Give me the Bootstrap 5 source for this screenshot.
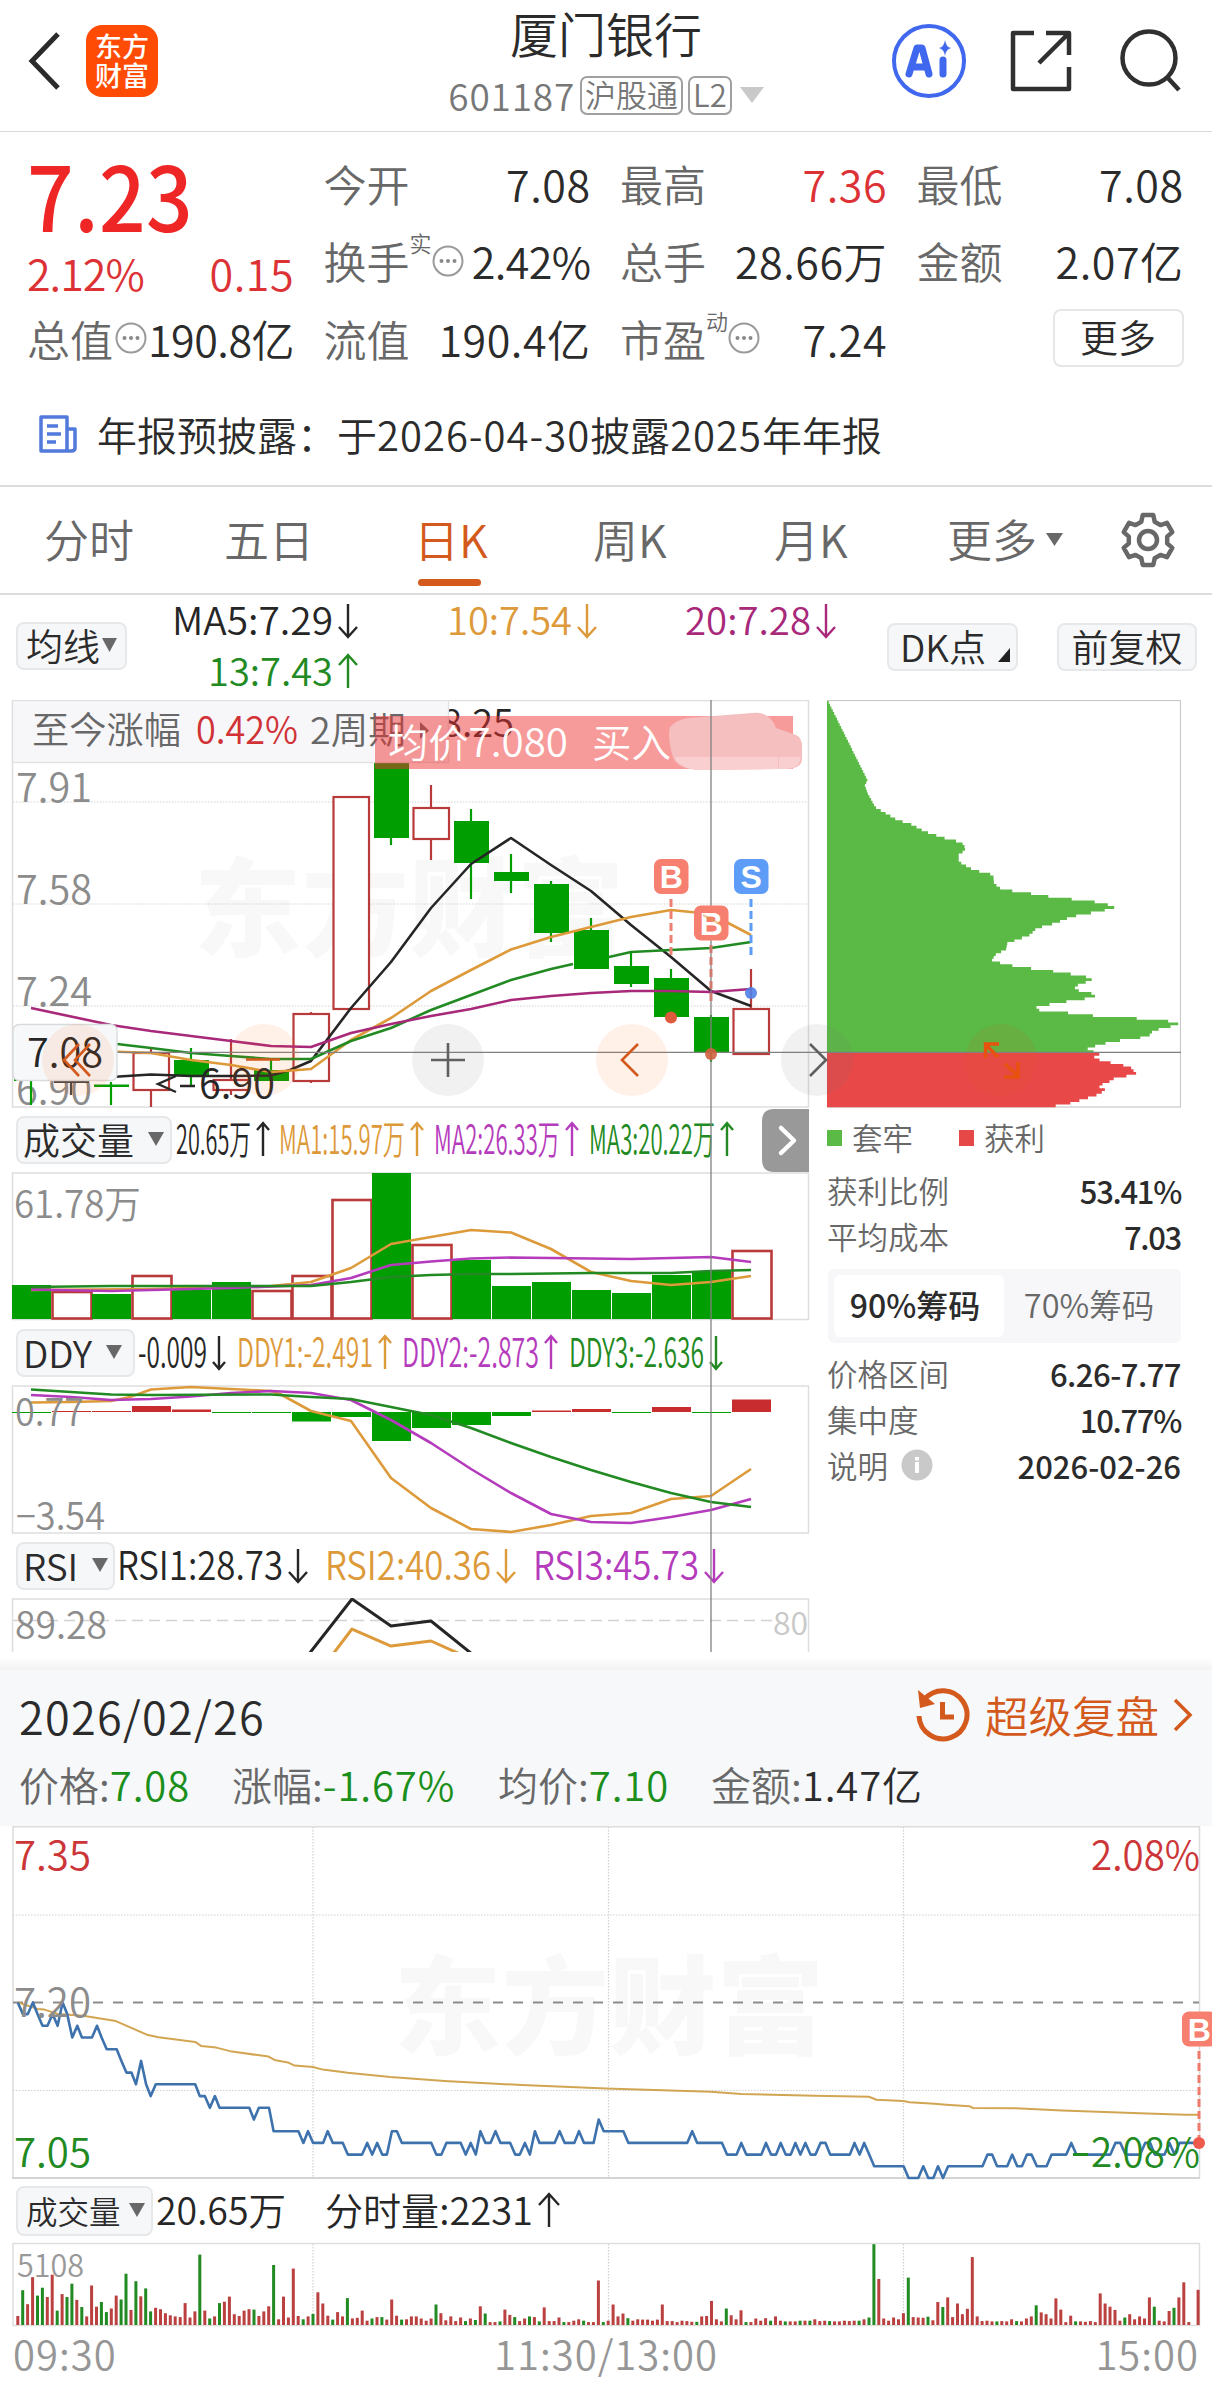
<!DOCTYPE html>
<html lang="zh-CN">
<head>
<meta charset="utf-8">
<meta name="viewport" content="width=device-width, initial-scale=1">
<title>厦门银行 601187</title>
<link href="https://cdn.jsdelivr.net/npm/bootstrap@5.3.0/dist/css/bootstrap.min.css" rel="stylesheet">
<style>
body{width:1212px;height:2383px;overflow:hidden;background:#fff;color:#2b2b2b;font-family:"Noto Sans CJK SC",sans-serif;font-weight:350;font-size:42px;line-height:1;white-space:nowrap}
svg{display:block;flex:none}
svg text{font-family:"Noto Sans CJK SC",sans-serif}
.c-gray{color:#686868}.c-red{color:#dc3236}.c-green{color:#1b8f1b}.c-orange{color:#d35a1c}
.topbar{height:132px;border-bottom:1.5px solid #dadada;padding:0 28px}
.top-side{width:400px;padding-bottom:9px}
.logo-box{width:72px;height:72px;border-radius:16px;background:#ff4b04;color:#fff;font-size:27px;line-height:29px;font-weight:500;margin-left:26px;padding-top:6px}
.stock-name{font-size:48px;height:68px;line-height:64px}
.stock-code{font-size:37px;color:#777;height:42px;margin-top:7px;margin-bottom:15px}
.stock-code>span:first-child{letter-spacing:.8px}
.stock-code>span{position:relative}
.mini-tag{border:2px solid #a0a0a0;border-radius:7px;height:39px;font-size:31px;line-height:32px;padding:0 3px;margin-left:5px;color:#777}
.quote{height:245px;padding:15px 29px 0 27px;display:grid;grid-template-columns:repeat(4,267px);column-gap:29.5px;grid-template-rows:repeat(3,77.5px)}
.quote .cell{display:flex;justify-content:space-between;align-items:center;height:72px;font-size:43px}
.quote .cell>span:last-child{letter-spacing:.5px}
.sup-note{font-size:22px;align-self:flex-start;margin-top:-8px;line-height:22px}
.quote .cell .big-price{display:inline-block;font-size:89px;font-weight:500;color:#ee2626;letter-spacing:-3px;line-height:80px;transform:scaleX(.92);transform-origin:left;padding-top:22px}
.more-btn{width:131px;height:58px;border:2px solid #e6e6e6;border-radius:8px;font-size:38px;line-height:50px;margin-left:auto;text-align:center}
.notice{height:110px;border-bottom:2px solid #dcdcdc;padding:5px 0 0 38px;font-size:40px}
.notice .nums{letter-spacing:1px}
.ktabs{height:108px;border-bottom:2px solid #dcdcdc;font-size:45px;color:#686868;padding-left:44px}
.ktabs .ktab{height:106px;line-height:104px;position:relative}
.ktabs .on{color:#d35a1c}
.ktabs .on::after{content:"";position:absolute;left:4px;bottom:7px;width:63px;height:7px;border-radius:4px;background:#d35a1c}
.mabar{height:105px;padding-left:16px}
.soft-btn{background:#f6f7f9;border:2px solid #e6e8ea;border-radius:8px;height:48px;font-size:37px;line-height:40px;padding-bottom:3px;display:flex;align-items:center;color:#2b2b2b;flex:none}
.charts{height:952px;position:relative}
.leftcol{width:820px}
.indrow{height:64px;padding-left:16px}
.overlay{position:absolute;left:0;top:0}
.chipcol{width:392px;padding-right:31px}
.chiprow{height:46px;font-size:30.5px;color:#686868;padding-left:7px}
.chiprow b,.seg b{font-weight:500;color:#2b2b2b;font-size:32px}
.chiprow b{font-size:31px}
.chiprow .tight{letter-spacing:-1.3px}
.legend-sq{width:15px;height:16px;display:inline-block}
.seg{margin:8px 0 7px 8px;background:#f7f7fa;border-radius:6px;height:74px;padding:6px;font-size:32.5px;color:#686868}
.seg>div{width:170px;height:62px;line-height:57px;text-align:center;border-radius:6px}
.seg>div:first-child{padding-right:8px}
.gapbar{height:18px;background:linear-gradient(#fff 0,#fff 30%,#f3f3f3 100%)}
.daypanel{height:156px;background:#f7f8fa;padding:0 19px}
.dayrow{height:66px;padding-top:4px;font-size:40px}
.dayrow .v{letter-spacing:.9px}
.timeaxis{padding:5px 13px 0;font-size:40px;letter-spacing:1px;color:#969696}
</style>
</head>
<body>

<header class="topbar d-flex justify-content-between">
  <div class="top-side d-flex align-items-center">
    <svg width="32" height="58" viewBox="0 0 32 58" fill="none" stroke="#2b2b2b" stroke-width="5"><path d="M30 2L4 29 30 56"/></svg>
    <div class="logo-box text-center">东方<br>财富</div>
  </div>
  <div class="text-center d-flex flex-column align-items-center">
    <div class="stock-name">厦门银行</div>
    <div class="stock-code d-flex align-items-center justify-content-center">
      <span>601187</span><span class="mini-tag">沪股通</span><span class="mini-tag">L2</span>
      <svg class="ms-2" width="24" height="18"><path d="M0 1h24L12 17z" fill="#c9c9c9"/></svg>
    </div>
  </div>
  <div class="top-side d-flex align-items-center justify-content-end">
    <svg width="76" height="76" viewBox="0 0 76 76"><circle cx="38" cy="38" r="35" fill="#fff" stroke="#4068ee" stroke-width="4"/><g stroke="#4068ee" fill="none" stroke-linecap="round" stroke-linejoin="round" stroke-width="7"><path d="M18 51L26 25H31L38 51M22 44H35"/><path d="M52 37v14"/></g><path d="M54 17q1 7 6 8-5 1-6 8-1-7-6-8 5-1 6-8z" fill="#4068ee"/></svg>
    <svg style="margin-left:43px" width="62" height="62" viewBox="0 0 62 62" fill="none" stroke="#303030" stroke-width="4.5" stroke-linejoin="round"><path d="M24 3H3v56h56V37M36 3h23v22M58 4L29 33"/></svg>
    <svg style="margin-left:46px;margin-right:2px" width="64" height="64" viewBox="0 0 64 64" fill="none" stroke="#303030" stroke-width="4.5"><circle cx="31" cy="29" r="26.5"/><path d="M49 48L61 61"/></svg>
  </div>
</header>

<section class="quote">
  <div class="cell"><span class="big-price">7.23</span></div>
  <div class="cell"><span class="c-gray">今开</span><span>7.08</span></div>
  <div class="cell"><span class="c-gray">最高</span><span class="c-red">7.36</span></div>
  <div class="cell"><span class="c-gray">最低</span><span>7.08</span></div>
  <div class="cell c-red" style="padding-top:24px"><span style="letter-spacing:-1px">2.12%</span><span>0.15</span></div>
  <div class="cell"><span class="c-gray d-flex align-items-center">换手<span class="sup-note">实</span><svg width="32" height="32" viewBox="0 0 32 32"><use href="#dots"/></svg></span><span style="letter-spacing:-.6px">2.42%</span></div>
  <div class="cell"><span class="c-gray">总手</span><span>28.66万</span></div>
  <div class="cell"><span class="c-gray">金额</span><span>2.07亿</span></div>
  <div class="cell"><span class="c-gray d-flex align-items-center">总值<svg style="margin-left:2px" width="32" height="32" viewBox="0 0 32 32"><use href="#dots"/></svg></span><span style="letter-spacing:-.5px">190.8亿</span></div>
  <div class="cell"><span class="c-gray">流值</span><span>190.4亿</span></div>
  <div class="cell"><span class="c-gray d-flex align-items-center">市盈<span class="sup-note">动</span><svg width="32" height="32" viewBox="0 0 32 32"><use href="#dots"/></svg></span><span>7.24</span></div>
  <div class="cell"><div class="more-btn">更多</div></div>
</section>
<svg width="0" height="0" class="position-absolute"><defs><g id="dots"><circle cx="16" cy="16" r="14.500" fill="none" stroke="#999" stroke-width="2"/><g fill="#888"><circle cx="9.500" cy="16" r="2"/><circle cx="16" cy="16" r="2"/><circle cx="22.500" cy="16" r="2"/></g></g></defs></svg>

<section class="notice d-flex align-items-center">
  <svg width="40" height="40" viewBox="0 0 40 40" fill="none" stroke="#5279dc" stroke-width="3.500" stroke-linejoin="round"><path d="M3 3h26v34H3zM29 15h8v19q0 3-4 3h-6M9 12h11M9 20h14M9 28h9"/></svg>
  <span style="margin-left:19px">年报预披露：于<span class="nums">2026-04-30</span>披露<span class="nums">2025</span>年年报</span>
</section>

<nav class="ktabs d-flex">
  <span class="ktab" style="width:180px">分时</span><span class="ktab" style="width:190px">五日</span><span class="ktab on" style="width:179px">日K</span><span class="ktab" style="width:181px">周K</span><span class="ktab" style="width:173px">月K</span><span class="ktab">更多</span>
  <svg style="margin:45px 0 0 9px" width="18" height="14"><path d="M0 1h17L8.500 14z" fill="#686868"/></svg>
  <svg style="margin:24px 0 0 55px" width="58" height="58" viewBox="-29 -29 58 58" fill="none" stroke="#686868" stroke-width="4.500" stroke-linejoin="round"><path id="gear"/><circle r="9"/></svg>
</nav>

<section class="mabar d-flex">
  <div class="soft-btn" style="margin-top:27px;width:111px;padding-left:8px">均线<svg width="16" height="14" style="margin-left:2px"><path d="M0 0h15L7.500 14z" fill="#686868"/></svg></div>
  <svg id="malegend" width="740" height="105" viewBox="127 595 740 105" overflow="visible"></svg>
  <div class="soft-btn" style="margin:28px 0 0 20px;width:131px;padding-left:11px">DK点<svg width="12" height="14" style="margin:18px 0 0 12px"><path d="M12 0V14H0z" fill="#222"/></svg></div>
  <div class="soft-btn justify-content-center" style="margin:28px 0 0 39px;width:140px">前复权</div>
</section>

<main class="charts d-flex">
  <div class="leftcol">
    <svg id="kchart" width="820" height="408" viewBox="0 700 820 408"></svg>
    <div class="indrow d-flex align-items-center"><div class="soft-btn" style="width:156px;padding-left:5px">成交量<svg width="17" height="14" style="margin-left:14px"><path d="M0 0h16L8 14z" fill="#686868"/></svg></div><svg id="vleg" width="640" height="64" viewBox="172 1108 640 64"></svg></div>
    <svg id="vchart" width="820" height="149" viewBox="0 1172 820 149"></svg>
    <div class="indrow d-flex align-items-center"><div class="soft-btn" style="width:119px;padding-left:5px">DDY<svg width="17" height="14" style="margin-left:14px"><path d="M0 0h16L8 14z" fill="#686868"/></svg></div><svg id="dleg" width="640" height="64" viewBox="135 1321 640 64"></svg></div>
    <svg id="dchart" width="820" height="149" viewBox="0 1385 820 149"></svg>
    <div class="indrow d-flex align-items-center"><div class="soft-btn" style="width:99px;padding-left:5px">RSI<svg width="17" height="14" style="margin-left:14px"><path d="M0 0h16L8 14z" fill="#686868"/></svg></div><svg id="rleg" width="640" height="64" viewBox="115 1534 640 64"></svg></div>
    <svg id="rchart" width="820" height="54" viewBox="0 1598 820 54"></svg>
  </div>
  <div class="chipcol">
    <svg id="chip" width="361" height="408" viewBox="820 700 361 408"></svg>
    <div class="chiprow d-flex align-items-center" style="height:59px"><i class="legend-sq" style="background:#5bb946"></i><span style="margin-left:10px;width:107px">套牢</span><i class="legend-sq" style="background:#e64848"></i><span style="margin-left:10px">获利</span></div>
    <div class="chiprow d-flex align-items-center justify-content-between"><span>获利比例</span><b class="tight">53.41%</b></div>
    <div class="chiprow d-flex align-items-center justify-content-between"><span>平均成本</span><b class="tight">7.03</b></div>
    <div class="seg d-flex" style="margin-top:10px"><div class="bg-white"><b>90%筹码</b></div><div>70%筹码</div></div>
    <div class="chiprow d-flex align-items-center justify-content-between"><span>价格区间</span><b style="letter-spacing:-.5px">6.26-7.77</b></div>
    <div class="chiprow d-flex align-items-center justify-content-between"><span>集中度</span><b class="tight">10.77%</b></div>
    <div class="chiprow d-flex align-items-center justify-content-between"><span class="d-flex align-items-center">说明<svg width="32" height="32" viewBox="0 0 32 32" style="margin-left:13px"><circle cx="16" cy="16" r="15.500" fill="#c9c9c9"/><path d="M14 8h4v3.500h-4zM14 13h4v11h-4z" fill="#fff"/></svg></span><b>2026-02-26</b></div>
  </div>
  <svg id="overlay" class="overlay" width="1212" height="952" viewBox="0 700 1212 952"></svg>
</main>

<div class="gapbar"></div>
<section class="daypanel">
  <div class="d-flex align-items-center justify-content-between" style="height:90px">
    <span style="font-size:45px;letter-spacing:1.300px">2026/02/26</span>
    <span class="c-orange d-flex align-items-center" style="font-size:43.500px">
      <svg width="56" height="56" viewBox="0 0 56 56" fill="none" stroke="#d35a1c" stroke-width="5"><path d="M4 29A24 24 0 1 0 9.500 12.500M27.500 15V30H39"/><path d="M3 3l2 18 15-4z" fill="#d35a1c" stroke="none"/></svg>
      <span style="margin-left:14px">超级复盘</span>
      <svg style="margin-left:14px" width="20" height="34" viewBox="0 0 20 34" fill="none" stroke="#d35a1c" stroke-width="3.500"><path d="M2 2L17 17 2 32"/></svg>
    </span>
  </div>
  <div class="dayrow d-flex"><span style="width:213px"><span class="c-gray">价格:</span><span class="c-green v">7.08</span></span><span style="width:266px"><span class="c-gray">涨幅:</span><span class="c-green v">-1.67%</span></span><span style="width:213px"><span class="c-gray">均价:</span><span class="c-green v">7.10</span></span><span><span class="c-gray">金额:</span><span class="v">1.47亿</span></span></div>
</section>
<svg id="mchart" width="1212" height="354" viewBox="0 1826 1212 354"></svg>
<div class="d-flex align-items-center" style="height:62px;padding-left:16px">
  <div class="soft-btn" style="width:137px;height:50px;padding-left:8px;font-size:31.500px">成交量<svg width="17" height="14" style="margin-left:8px"><path d="M0 0h16L8 14z" fill="#686868"/></svg></div>
  <svg id="mleg" width="640" height="62" viewBox="153 2180 640 62"></svg>
</div>
<svg id="mvol" width="1212" height="86" viewBox="0 2242 1212 86"></svg>
<footer class="timeaxis d-flex justify-content-between"><span>09:30</span><span>11:30/13:00</span><span>15:00</span></footer>

<script src="https://cdn.jsdelivr.net/npm/bootstrap@5.3.0/dist/js/bootstrap.bundle.min.js"></script>
<script>
const $=id=>document.getElementById(id);
const G='#009e00',R='#b93a3a',BK='#262626',OR='#dd9a3a',MG='#a8287a',PU='#b53bbd',DG='#228a22',AX='#8c8c8c';
const put=(id,s)=>{$(id).innerHTML+=s};
const rect=(x,y,w,h,f,e='')=>`<rect x="${x}" y="${y}" width="${w}" height="${h}" fill="${f}" ${e}/>`;
const line=(x1,y1,x2,y2,c,w=1,e='')=>`<line x1="${x1}" y1="${y1}" x2="${x2}" y2="${y2}" stroke="${c}" stroke-width="${w}" ${e}/>`;
const poly=(p,c,w=2.6)=>`<polyline points="${p}" fill="none" stroke="${c}" stroke-width="${w}" stroke-linejoin="round"/>`;
// fitted text: spans x..x2 on baseline y
const txt=(x,x2,y,s,size,f,e='')=>`<text x="${x}" y="${y}" font-size="${size}" fill="${f}" ${x2?`textLength="${x2-x}" lengthAdjust="spacingAndGlyphs"`:''} ${e}>${s}</text>`;
// legend entry with a drawn trend arrow at its end
const leg=(x,x2,y,s,size,c,up,aw=10)=>{const t=x2-aw;
  return txt(x,x2-2*aw-5,y,s,size,c)+`<path d="M${t} ${y-31}V${y+2}M${t-aw+1} ${up?y-31+aw:y+2-aw}L${t} ${up?y-31:y+2}L${t+aw-1} ${up?y-31+aw:y+2-aw}" fill="none" stroke="${c}" stroke-width="2.4"/>`};
const mark=(x,y,s,c)=>rect(x,y,34.5,35,c,'rx="7"')+`<text x="${x+17.2}" y="${y+29}" font-size="32" font-weight="700" fill="#fff" text-anchor="middle" style="font-family:'Liberation Sans',sans-serif">${s}</text>`;
const cx=i=>31+40*i;

// gear
let g='';for(let i=0;i<6;i++){const p=(r,d)=>{const a=(i*60+d-90)*Math.PI/180;return (r*Math.cos(a)).toFixed(1)+' '+(r*Math.sin(a)).toFixed(1)};g+=(i?'L':'M')+p(25.5,-12)+'L'+p(25.5,12)+'L'+p(19.5,20)+'L'+p(19.5,40)}
$('gear').setAttribute('d',g+'Z');

put('malegend',leg(172,358,635,'MA5:7.29',38,BK,0)+leg(447,597,635,'10:7.54',38,OR,0)+leg(685,836,635,'20:7.28',38,MG,0)+leg(208,358,686,'13:7.43',38,DG,1));

// daily candles: [colour, body top, body bottom, high, low]
const K=[['g',1079,1081,1079,1105],['b',1081,1083,1081,1095],['g',1084.5,1087,1082,1105],['r',1053,1090,1048,1107],['g',1060,1076,1048,1087],['r',1080,1090,1039,1095],['g',1070,1081,1060,1081],['r',1014,1081,1012,1083],['r',797,1009,797,1009],['g',740,838,740,845],['r',808,839,785,860],['g',821,863,809,899],['g',872,881,854,893],['g',884,933,881,942],['g',930,969,918,969],['g',966,984,953,987],['g',978,1017,969,1023],['g',1017,1053,1015,1062],['r',1009,1054,969,1054]];
let s='<text x="194" y="948" font-size="107" font-weight="900" fill="#f8f8f8" textLength="430">东方财富</text>';
s+=rect(12.500,700.5,796,406.5,'none','stroke="#dedede" stroke-width="1.5"');
[802,904,1006].forEach(y=>s+=line(13,y,808,y,'#d4d4d4',1.2,'stroke-dasharray="1.5 1.5"'));
[[802,'7.91'],[904,'7.58'],[1006,'7.24'],[1104,'6.90']].forEach(a=>s+=txt(16,92,a[0],a[1],40,AX));
K.forEach((k,i)=>{const x=cx(i);
 if(k[0]=='r'){s+=line(x,k[3],x,k[1],R,2.2)+line(x,k[2],x,k[4],R,2.2)+rect(x-17.5,k[1],35.5,k[2]-k[1],i==5?'none':'#fff',`stroke="${R}" stroke-width="2.2"`)}
 else{const c=k[0]=='g'?G:'#444';s+=line(x,k[3],x,k[4],c,2.2)+rect(x-17,k[1],35,k[2]-k[1],c)}});
s+=poly('31,1078 111,1077 151,1074.5 191,1076 231,1076 271,1075.5 290,1070 311,1061 351,1008 391,962 431,908 471,864 511,838 551,865 591,891 631,925 671,957 711,991 751,1006',BK);
s+=poly('100,1051 151,1053 191,1060 231,1065 271,1072 311,1069 351,1040 391,1018 431,991 471,970 511,949.5 551,937 591,927 631,917 671,910 711,914 751,935',OR);
s+=poly('100,1042 151,1048 191,1053 231,1056 271,1059 311,1059 351,1041 391,1028 431,1010 471,995 511,980 551,969 573,964 ',DG)+poly('609,957 631,952 671,950 711,948 751,942',DG);
s+=poly('31,1008 111,1025 151,1031 191,1036 231,1041 271,1046 311,1047 351,1033 391,1024 431,1016 471,1009 511,1000 551,996 591,993 631,991 671,991 711,992 751,989',MG);
s+=`<path d="M176 1076L158 1084 176 1092M180 1086H195" fill="none" stroke="${BK}" stroke-width="2.4"/>`+txt(199,275,1098,'6.90',40,BK);
s+=txt(441,514,737,'8.25',38,BK)+rect(12.5,700.5,436,62,'#f7f7fa','stroke="#e0e0e2" stroke-width="1.3"');
s+=txt(32,181,744,'至今涨幅',37,'#686868')+txt(196,298,744,'0.42%',38,'#d03236')+txt(310,406,744,'2周期',37,'#686868')+'<path d="M420 722v17l9-8.500z" fill="#686868"/>';
s+=rect(375,716,418,53,'rgb(239,49,49)','fill-opacity=".49"')+txt(388,568,757,'均价7.080',39,'#fff')+txt(592,671,757,'买入',39,'#fff');
s+='<path d="M670 727Q676 720 688 718L752 713Q770 711 776 728L796 735Q803 738 802 750V760Q801 769 786 769H778L700 770Q676 769 673 757Q667 738 670 727z" fill="#f5bebf"/><path d="M675 757H778V769L700 770Q679 769 675 757zM779 757H801Q799 769 786 769H779z" fill="#f9cfcf"/>';
put('kchart',s);

// volume
const V=[['g',1285],['r',1292],['g',1294],['r',1276],['g',1290],['g',1282],['r',1291],['r',1276],['r',1200],['g',1173],['r',1245],['g',1260],['g',1286],['g',1282],['g',1290],['g',1293],['g',1275],['g',1271],['r',1251]];
const frame=(y,h)=>rect(12.5,y,796,h,'none','stroke="#dedede" stroke-width="1.5"');
s=frame(1173,146.5)+txt(14,141,1218,'61.78万',38,AX);
V.forEach((v,i)=>{const x=12+40*i;s+=v[0]=='g'?rect(x,v[1],39,1319-v[1],G):rect(x+.5,v[1],39,1318.500-v[1],'#fff',`stroke="${R}" stroke-width="2.6"`)});
s+=poly('31,1290 151,1289 231,1287 271,1286 311,1282 351,1268 391,1244 431,1237 471,1230 511,1232.500 551,1249 591,1272 631,1281 671,1285 711,1282 751,1276',OR);
s+=poly('31,1289.5 111,1291 151,1290 231,1288 311,1285 351,1278 391,1265 431,1261.5 471,1258.5 511,1257.5 551,1258 631,1259 671,1258 711,1257 751,1262',PU);
s+=poly('31,1287 111,1286 231,1286 311,1286 351,1282 391,1277 431,1275 471,1274 511,1274 591,1273 671,1273 711,1271 751,1270',DG);
put('vchart',s);
put('vleg',leg(176,270,1154,'20.65万',40,BK,1,7)+leg(279,424,1154,'MA1:15.97万',40,OR,1,7)+leg(434,579,1154,'MA2:26.33万',40,PU,1,7)+leg(589,734,1154,'MA3:20.22万',40,DG,1,7));

// DDY
const D=[1,-1,-1,-6,-2.5,1,1,9.5,5,29,16,13,4,-1.5,-3,1,-5,1,-12.5];
s=frame(1386,147);
D.forEach((d,i)=>{s+=d>0?rect(12+40*i,1412,39,d,G):rect(12+40*i,1412+d,39,-d,'#c92c2f')});
s+=poly('31,1402.5 71,1402 111,1401 130,1397 151,1389.5 191,1387 231,1389 271,1391 280,1394 311,1411 351,1421 391,1478 431,1508 471,1529 511,1532 551,1525 591,1516 631,1513 671,1499 711,1496 751,1469',OR);
s+=poly('31,1395 71,1397 111,1400 151,1399 191,1396.5 231,1393 271,1391 311,1393 351,1400 391,1420 431,1443 471,1469 511,1493 551,1514 591,1522 631,1523 671,1517 711,1510 751,1499',PU);
s+=poly('31,1389.5 71,1392 111,1394.5 151,1395 271,1394.5 311,1397 351,1399 391,1407 431,1415 471,1428 511,1443 551,1457 591,1470 631,1482 671,1493 711,1502 751,1507',DG);
s+=txt(15,84,1426,'0.77',38,AX)+txt(16,105,1530,'−3.54',38,AX);
put('dchart',s);
put('dleg',leg(138,226,1367,'-0.009',40,BK,0,7)+leg(237,392,1367,'DDY1:-2.491',40,OR,1,7)+leg(402,558,1367,'DDY2:-2.873',40,PU,1,7)+leg(569,723,1367,'DDY3:-2.636',40,DG,0,7));

// RSI
s=`<path d="M12.500 1652V1599H808.500V1652" fill="none" stroke="#dedede" stroke-width="1.500"/>`+line(13,1620.500,808,1620.500,'#d2d2d2',1.300,'stroke-dasharray="11 6"');
s+=txt(15,107,1639,'89.28',38,AX)+rect(772,1612,35,20,'#fff')+txt(773,808,1635,'80',31,'#c8c8c8');
s+=poly('309,1654 352,1599 391,1626 431,1621 472,1654',BK,3)+poly('333,1654 352,1629 391,1646 431,1641 460,1654',OR,3);
put('rchart',s);
put('rleg',leg(117,308,1580,'RSI1:28.73',39,BK,0)+leg(325,516,1580,'RSI2:40.36',39,OR,0)+leg(533,724,1580,'RSI3:45.73',39,PU,0));

// chip distribution: [price row, width] profile, drawn as stacked steps
const P=[[33,54],[262,168],[272,173],[285,164],[310,173],[352,196],[390,262],[402,302],[425,345],[445,405],[457,455],[475,467],[485,460],[492,446],[515,446],[540,490],[555,550],[580,552],[598,575],[608,645],[620,720],[635,850],[650,921],[662,880],[680,785],[700,735],[715,680],[735,660],[760,592],[778,588],[795,555],[813,545],[830,620],[845,740],[855,800],[865,853],[878,825],[890,790],[903,808],[915,868],[928,820],[940,735],[957,655],[968,770],[978,860],[988,1030],[998,1113],[1008,1090],[1022,1030],[1040,1015],[1055,905],[1075,830],[1093,868],[1104,848],[1115,890],[1130,960],[1153,981],[1164,915],[1178,893],[1188,860],[1197,887],[1212,870],[1228,820],[1243,770],[1252,710]];
const wAt=y=>{for(let i=1;i<P.length;i++)if(y<=P[i][0]){const a=P[i-1],b=P[i];return a[1]+(b[1]-a[1])*(y-a[0])/(b[0]-a[0])}return 710};
const zone=(y0,y1,c)=>{const n=Math.round((y1-y0)/8.3),h=(y1-y0)/n;let d=`M827 ${690+y0/3}`;for(let k=0;k<n;k++){const X=(810+wAt(y0+(k+.5)*h)/3).toFixed(1);d+=`L${X} ${(690+(y0+k*h)/3).toFixed(1)}V${(690+(y0+(k+1)*h)/3).toFixed(1)}`}return `<path d="${d}L827 ${690+y1/3}z" fill="${c}"/>`};
put('chip',rect(827.5,700.5,353,406.500,'none','stroke="#c8c8c8" stroke-width="1.2"')+zone(33,1089,'#5bb946')+zone(1089,1252,'#e84848'));

// crosshair, floating buttons, trade markers
s=line(13,1052.300,1181,1052.300,'#808080',1.3)+line(711,700,711,1652,'#808080',1.3);
s+=rect(13,1024.5,104,56,'#f7f8fa','rx="6" stroke="#d8dadc" stroke-width="1.300"')+txt(27,103,1067,'7.08',40,BK);
[[78,'#ff6a1e'],[264,'#ff6a1e'],[448,'#777'],[632,'#ff6a1e'],[817,'#777'],[1001,'#e2591a']].forEach(a=>s+=`<circle cx="${a[0]}" cy="1060" r="36" fill="${a[1]}" fill-opacity=".1"/>`);
s+='<g fill="none" stroke-width="2.600"><path d="M79 1044L64 1060 79 1076M90 1044L75 1060 90 1076M246 1059.500H280M638 1044L622 1060 638 1076" stroke="#d35a1c"/><path d="M431 1060H465M448 1043V1077M810 1044L826 1060 810 1076" stroke="#606060"/><path d="M999 1044H985.500V1058M986 1045L998 1057M1005 1064L1017 1075M1018 1062V1077H1004" stroke="#e8520e" stroke-width="3.500"/></g>';
const dash=(x,y1,y2,c)=>line(x,y1,x,y2,c,3,'stroke-dasharray="8 4"');
s+=dash(671,899,955,'#ee8072')+dash(711,945,1001,'#d07a6e')+dash(751,899,955,'#5d9df8');
s+=mark(654,859,'B','#f67f6f')+mark(694,905.500,'B','#f67f6f')+mark(734,859,'S','#5d9df8');
s+='<path d="M703 915L720 924" stroke="#dd9a3a" stroke-width="2" opacity=".5"/><circle cx="671" cy="1017.500" r="6" fill="#dd5a3c"/><circle cx="711" cy="1054" r="6" fill="#d0603f" opacity=".9"/><circle cx="751" cy="993" r="6" fill="#5080e8" opacity=".9"/>';
s+='<path d="M809 1109H774Q762 1109 762 1121V1160Q762 1172 774 1172H809z" fill="#999"/><path d="M781 1128L794 1140.500 781 1153" fill="none" stroke="#fff" stroke-width="4.500" stroke-linecap="round" stroke-linejoin="round"/>';
put('overlay',s);

// intraday price: [plot x, ticks below 7.20]
const X=x=>(x/2.5874).toFixed(1),Y=y=>(1820+y/2.785).toFixed(1),O=1568;
const A='46:0,59:1,72:1,85:0,97:1,110:2,123:2,136:1,149:2,162:0,174:1,187:3,200:2,212:3,238:3,251:2,263:3,276:4,302:4,314:5,327:6,340:6,352:7,365:5,378:7,390:8,403:7,505:7,517:8,530:8,543:9,556:8,568:9,645:9,657:10,670:9,696:9,708:11,772:11,785:12,797:11,810:12,836:12,848:11,861:12,887:12,900:13,937:13,950:12,963:13,976:12,989:13,1001:13,1014:11,1027:11,1040:12,1116:12,1129:13,1142:13,1155:12,1192:12,1205:13,1218:12,1231:13,1243:11,1256:12,1269:12,1282:11,1295:12,1320:12,1333:13,1345:13,1358:12,1371:13,1384:11,1396:12,1435:12,1448:11,1461:12,1486:12,1498:11,1511:12,1536:12,1549:10,1562:11';
const B='45:11,58:12,210:12,223:11,236:12,300:12,313:13,338:13,350:12,363:13,402:13,414:12,427:13,440:13,452:12,465:13,478:13,490:12,503:13,516:12,529:13,542:13,555:12,568:12,580:13,631:13,643:12,656:13,668:12,681:13,694:14,770:14,783:15,808:15,821:14,834:15,847:15,859:14,872:15,885:14,974:14,987:13,999:13,1012:14,1038:14,1051:13,1064:14,1076:14,1089:13,1101:13,1115:14,1140:14,1153:13,1191:13,1204:12,1217:13,1305:13,1318:12,1331:12,1344:13,1382:13,1395:12,1408:12,1420:13,1445:13,1458:12,1471:13,1484:12,1534:12';
const lv=(t,o)=>t.split(',').map(p=>{const[a,b]=p.split(':');return X(+a+o)+','+Y(508+32.6*b)}).join(' ');
const M1=[[46,508],[97,526],[115,528],[150,540],[215,545],[300,560],[325,572],[380,598],[410,605],[505,618],[520,629],[560,634],[600,645],[695,659],[710,668],[745,675],[762,684],[810,688],[835,695],[900,704],[1010,716],[1150,727],[1350,738],[1568,748],[1838,757],[1918,763],[2108,768],[2248,771],[2268,779],[2338,783],[2353,786],[2418,790],[2448,793],[2508,797],[2518,802],[2628,803],[2748,809],[2968,817],[3068,821],[3102,821]];
s='<text x="394" y="2046" font-size="107" font-weight="900" fill="#f8f8f8" textLength="430">东方财富</text>';
s+=`<path d="M13 2178V1826.800H1199.500V2178" fill="none" stroke="#dcdcdc" stroke-width="1.500"/>`+line(12,2178,1200,2178,'#d4d4d4',2);
const dots='stroke-dasharray="1.500 1.500"';
[1915,2090.500].forEach(y=>s+=line(13,y,1199,y,'#d0d0d0',1.200,dots));
[313,608.500,903.500].forEach(x=>s+=line(x,1827,x,2178,'#d0d0d0',1.200,dots));
s+=line(13,2002.500,1199,2002.500,'#8c8c8c',1.800,'stroke-dasharray="10 10"');
s+=poly(M1.map(p=>X(p[0])+','+Y(p[1])).join(' '),'#d2a552',2)+poly(lv(A,0)+' '+lv(B,O),'#3e72ad',2.6);
s+=txt(14,91,1869.500,'7.35',40,'#cc3638')+txt(14,91,2017,'7.20',40,AX)+txt(14,91,2166.500,'7.05',40,DG)+txt(1091,1200,1869.500,'2.08%',40,'#cc3638')+txt(1091,1200,2166.500,'2.08%',40,DG)+line(1073,2154.500,1088,2154.500,DG,3);
s+=dash(1199,2051,2137,'#ee7a6c')+'<circle cx="1199" cy="2143" r="6" fill="#ee5a4c"/>'+mark(1182,2011.500,'B','#f67f6f');
put('mchart',s);
put('mleg',txt(156,286,2225,'20.65万',38,BK)+leg(325,560,2225,'分时量:2231',38,BK,1,11));

const H='r25 g97 r58 r133 g82 g104 r78 r140 g40 r86 g78 g115 r70 g50 r24 r110 r51 g64 g36 r46 r82 g71 g143 r42 g122 r80 g102 g38 r48 r44 r33 r27 r24 r22 r61 r21 r38 g196 r40 g18 r24 g61 r65 r79 r30 r25 r40 r44 g43 r25 r38 r52 g167 r16 r79 r21 r157 r25 g16 r24 g31 r91 r60 r26 g15 r36 r24 g75 r18 r20 r40 r12 g18 r22 g22 r15 r71 r26 g15 r16 r24 r24 r18 r12 r18 g57 r33 r13 r24 r11 r21 g11 r18 g14 r52 g32 r8 r8 g10 r43 r28 g22 r11 r18 g24 r22 g10 r49 r11 r11 r21 g8 r8 r12 r16 g12 r8 r8 r124 g8 r12 r57 r24 r32 g19 r12 r16 r15 r15 r12 r15 r57 r11 r11 r8 r12 r11 r9 g9 r24 r25 r67 r16 r10 g46 r27 r16 r41 g8 r8 r18 r12 r19 g12 r24 r12 g10 r10 r10 g12 r12 g12 r16 r11 r12 g11 r10 r10 r12 r11 r12 g12 r16 g21 g225 r128 r18 r12 r21 r16 r33 g132 r22 r21 r20 g23 r13 r64 g50 r77 r22 r60 r30 r45 r189 r24 r11 r12 r10 g10 r11 r10 r16 g11 r10 r18 r24 g55 r35 r30 r18 r74 r43 r8 r26 g10 r10 r9 r11 r8 r88 r60 r51 r42 r12 g21 r30 r16 r24 r18 r77 g51 r12 r10 r39 g48 r77 r119 r8 r0 r98'.split(' ');
s=rect(13,2243.500,1186.500,82,'none','stroke="#dedede" stroke-width="1.500"');
[313,608.500,903.500].forEach(x=>s+=line(x,2244,x,2325,'#d0d0d0',1.200,dots));
s+=txt(17,84,2277,'5108',31,'#999');
H.forEach((h,i)=>{const n=h.slice(1)/2.785;s+=rect((16.3+4.920*i-(i==240?.5:0)).toFixed(1),(2325-n).toFixed(1),3,n.toFixed(1),h[0]=='g'?DG:'#bb4040')});
put('mvol',s);
</script>
</body>
</html>
